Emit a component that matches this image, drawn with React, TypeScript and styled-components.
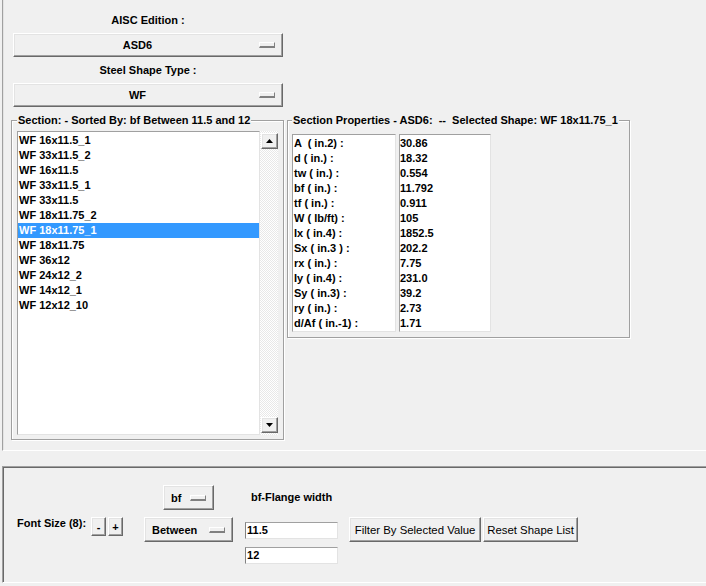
import styled, { createGlobalStyle } from "styled-components";

const GlobalStyle = createGlobalStyle`
    html, body {
        margin: 0;
        padding: 0;
        background: #f0f0f0;
        overflow: hidden;
    }
    body {
        font-family: "Liberation Sans", Arial, sans-serif;
        font-size: 11px;
        color: #000;
    }
`;

const Window = styled.div`
    width: 706px;
    height: 586px;
    background: #f0f0f0;
    overflow: hidden;
`;

const TopFrame = styled.div`
    box-sizing: border-box;
    height: 451px;
    margin-left: 2px;
    padding: 13px 0 0 8px;
    border-left: 1px solid #a0a0a0;
    border-bottom: 1px solid #fff;
    box-shadow: inset 1px 0 0 #e3e3e3;
`;

const Controls = styled.div`
    display: flex;
    flex-direction: column;
    width: 270px;
    margin-left: 2px;
`;

const FieldLabel = styled.div`
    font-weight: bold;
    font-size: 11px;
    line-height: 14px;
    text-align: center;
    margin-bottom: 6px;
`;

const raised = `
    border: 1px solid;
    border-color: #fff #696969 #696969 #fff;
    box-shadow: inset -1px -1px 0 #a0a0a0, inset 1px 1px 0 #e3e3e3;
    background: #f0f0f0;
`;

const MenuButton = styled.div<{ $width?: number; $height?: number; $center?: boolean }>`
    ${raised}
    box-sizing: border-box;
    display: flex;
    align-items: center;
    justify-content: space-between;
    width: ${(p) => (p.$width ? `${p.$width}px` : "100%")};
    height: ${(p) => p.$height ?? 25}px;
    padding: ${(p) => (p.$center ? "0 7px 0 2px" : "0 7px 0 7px")};
    font-weight: bold;
    font-size: 11px;
    margin-bottom: ${(p) => (p.$center ? "6px" : "0")};
`;

const MenuText = styled.span<{ $center?: boolean }>`
    flex: ${(p) => (p.$center ? 1 : "none")};
    text-align: ${(p) => (p.$center ? "center" : "left")};
    white-space: nowrap;
`;

const Indicator = styled.span`
    box-sizing: border-box;
    width: 16px;
    height: 6px;
    border-top: 1px solid #fff;
    border-left: 1px solid #fff;
    border-right: 1px solid #808080;
    border-bottom: 2px solid #808080;
    flex: none;
`;

const PanelRow = styled.div`
    display: flex;
    align-items: flex-start;
    gap: 3px;
`;

const LabelFrame = styled.fieldset<{ $width: number; $pad: string }>`
    box-sizing: border-box;
    width: ${(p) => p.$width}px;
    margin: 0;
    padding: ${(p) => p.$pad};
    border: 1px solid #a0a0a0;
    box-shadow: inset 1px 1px 0 #fff, 1px 1px 0 #fff;
    min-width: 0;
`;

const Legend = styled.legend`
    padding: 0 1px;
    font-weight: bold;
    font-size: 11px;
    line-height: 14px;
    white-space: pre;
    background: #f0f0f0;
`;

const ListArea = styled.div`
    display: flex;
    height: 304px;
`;

const ListBox = styled.div`
    box-sizing: border-box;
    width: 243px;
    height: 100%;
    padding-top: 1px;
    background: #fff;
    border: 1px solid;
    border-color: #a0a0a0 #e3e3e3 #e3e3e3 #a0a0a0;
`;

const ListItem = styled.div<{ $selected?: boolean }>`
    height: 15px;
    line-height: 15px;
    padding-left: 1px;
    font-weight: bold;
    font-size: 11px;
    white-space: nowrap;
    background: ${(p) => (p.$selected ? "#3399ff" : "transparent")};
    color: ${(p) => (p.$selected ? "#fff" : "#000")};
`;

const ScrollBar = styled.div`
    box-sizing: border-box;
    width: 18px;
    height: 100%;
    padding: 2px 0 2px 1px;
    display: flex;
    flex-direction: column;
    justify-content: space-between;
    background-color: #fff;
    background-image: repeating-conic-gradient(#e8e8e8 0 25%, #fff 0 50%);
    background-size: 2px 2px;
`;

const ArrowButton = styled.div`
    ${raised}
    box-sizing: border-box;
    width: 17px;
    height: 16px;
    display: flex;
    align-items: center;
    justify-content: center;
`;

const PropsArea = styled.div`
    display: flex;
    gap: 3px;
`;

const PropColumn = styled.div<{ $width: number; $indent: number }>`
    box-sizing: border-box;
    width: ${(p) => p.$width}px;
    height: 198px;
    padding: 1px 0 0 ${(p) => p.$indent}px;
    background: #fff;
    border: 1px solid;
    border-color: #a0a0a0 #e3e3e3 #e3e3e3 #a0a0a0;
`;

const PropRow = styled.div`
    height: 15px;
    line-height: 15px;
    font-weight: bold;
    font-size: 11px;
    white-space: pre;
`;

const BottomFrame = styled.div`
    box-sizing: border-box;
    height: 117px;
    margin: 15px 0 0 2px;
    padding: 18px 0 0 14px;
    border-top: 1px solid #a0a0a0;
    border-left: 1px solid #a0a0a0;
    border-bottom: 1px solid #fff;
    box-shadow: inset 1px 1px 0 #696969;
    display: flex;
    align-items: flex-start;
`;

const FontGroup = styled.div`
    display: flex;
    align-items: flex-start;
    margin-top: 32px;
`;

const BoldText = styled.span`
    font-weight: bold;
    font-size: 11px;
    line-height: 14px;
    margin-top: -1px;
    white-space: nowrap;
`;

const SmallButton = styled.div<{ $first?: boolean }>`
    ${raised}
    box-sizing: border-box;
    width: 15px;
    height: 19px;
    margin-left: ${(p) => (p.$first ? 5 : 2)}px;
    display: flex;
    align-items: center;
    justify-content: center;
    font-weight: bold;
    font-size: 11px;
`;

const MenuGroup = styled.div`
    display: flex;
    flex-direction: column;
    align-items: center;
    gap: 7px;
    margin-left: 21px;
`;

const EntryGroup = styled.div`
    display: flex;
    flex-direction: column;
    align-items: center;
    width: 93px;
    margin-left: 12px;
`;

const EntryLabel = styled.div`
    height: 25px;
    line-height: 25px;
    font-weight: bold;
    font-size: 11px;
    white-space: nowrap;
`;

const Entry = styled.div<{ $gap: number }>`
    box-sizing: border-box;
    width: 93px;
    height: 17px;
    margin-top: ${(p) => p.$gap}px;
    padding-left: 1px;
    line-height: 15px;
    font-weight: bold;
    font-size: 11px;
    background: #fff;
    border: 1px solid;
    border-color: #a0a0a0 #e3e3e3 #e3e3e3 #828282;
`;

const ActionGroup = styled.div`
    display: flex;
    gap: 2px;
    margin: 32px 0 0 11px;
`;

const ActionButton = styled.div<{ $width: number }>`
    ${raised}
    box-sizing: border-box;
    width: ${(p) => p.$width}px;
    height: 25px;
    display: flex;
    align-items: center;
    justify-content: center;
    font-size: 11.4px;
    white-space: nowrap;
`;

const shapes = [
    "WF 16x11.5_1",
    "WF 33x11.5_2",
    "WF 16x11.5",
    "WF 33x11.5_1",
    "WF 33x11.5",
    "WF 18x11.75_2",
    "WF 18x11.75_1",
    "WF 18x11.75",
    "WF 36x12",
    "WF 24x12_2",
    "WF 14x12_1",
    "WF 12x12_10",
];

const properties = [
    ["A  ( in.2) :", "30.86"],
    ["d ( in.) :", "18.32"],
    ["tw ( in.) :", "0.554"],
    ["bf ( in.) :", "11.792"],
    ["tf ( in.) :", "0.911"],
    ["W ( lb/ft) :", "105"],
    ["Ix ( in.4) :", "1852.5"],
    ["Sx ( in.3 ) :", "202.2"],
    ["rx ( in.) :", "7.75"],
    ["Iy ( in.4) :", "231.0"],
    ["Sy ( in.3) :", "39.2"],
    ["ry ( in.) :", "2.73"],
    ["d/Af ( in.-1) :", "1.71"],
];

const Arrow = ({ down }: { down?: boolean }) => (
    <svg width="7" height="4" viewBox="0 0 7 4">
        <polygon points={down ? "0,0 7,0 3.5,4" : "3.5,0 7,4 0,4"} fill="#000" />
    </svg>
);

export default function App() {
    const selected = "WF 18x11.75_1";

    return (
        <Window>
            <GlobalStyle />
            <TopFrame>
                <Controls>
                    <FieldLabel>AISC Edition :</FieldLabel>
                    <MenuButton $center $height={24}>
                        <MenuText $center>ASD6</MenuText>
                        <Indicator />
                    </MenuButton>
                    <FieldLabel>Steel Shape Type :</FieldLabel>
                    <MenuButton $center $height={24}>
                        <MenuText $center>WF</MenuText>
                        <Indicator />
                    </MenuButton>
                </Controls>
                <PanelRow>
                    <LabelFrame $width={273} $pad="4px 4px 4px 5px">
                        <Legend>Section: - Sorted By: bf Between 11.5 and 12</Legend>
                        <ListArea>
                            <ListBox>
                                {shapes.map((name) => (
                                    <ListItem key={name} $selected={name === selected}>
                                        {name}
                                    </ListItem>
                                ))}
                            </ListBox>
                            <ScrollBar>
                                <ArrowButton>
                                    <Arrow />
                                </ArrowButton>
                                <ArrowButton>
                                    <Arrow down />
                                </ArrowButton>
                            </ScrollBar>
                        </ListArea>
                    </LabelFrame>
                    <LabelFrame $width={343} $pad="7px 4px 5px 4px">
                        <Legend>{`Section Properties - ASD6:  --  Selected Shape: ${selected}`}</Legend>
                        <PropsArea>
                            <PropColumn $width={104} $indent={1}>
                                {properties.map(([label]) => (
                                    <PropRow key={label}>{label}</PropRow>
                                ))}
                            </PropColumn>
                            <PropColumn $width={92} $indent={0}>
                                {properties.map(([label, value]) => (
                                    <PropRow key={label}>{value}</PropRow>
                                ))}
                            </PropColumn>
                        </PropsArea>
                    </LabelFrame>
                </PanelRow>
            </TopFrame>

            <BottomFrame>
                <FontGroup>
                    <BoldText>Font Size (8):</BoldText>
                    <SmallButton $first>-</SmallButton>
                    <SmallButton>+</SmallButton>
                </FontGroup>
                <MenuGroup>
                    <MenuButton $width={51}>
                        <MenuText>bf</MenuText>
                        <Indicator />
                    </MenuButton>
                    <MenuButton $width={89}>
                        <MenuText>Between</MenuText>
                        <Indicator />
                    </MenuButton>
                </MenuGroup>
                <EntryGroup>
                    <EntryLabel>bf-Flange width</EntryLabel>
                    <Entry $gap={12}>11.5</Entry>
                    <Entry $gap={8}>12</Entry>
                </EntryGroup>
                <ActionGroup>
                    <ActionButton $width={132}>Filter By Selected Value</ActionButton>
                    <ActionButton $width={95}>Reset Shape List</ActionButton>
                </ActionGroup>
            </BottomFrame>
        </Window>
    );
}
